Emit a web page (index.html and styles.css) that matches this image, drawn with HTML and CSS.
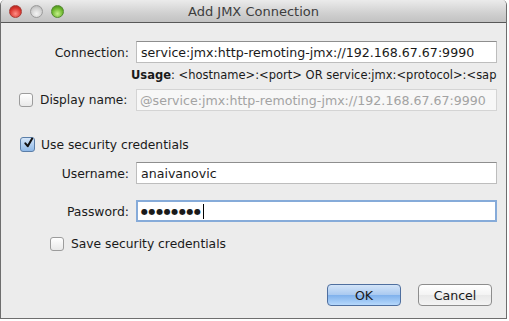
FILE: index.html
```html
<!DOCTYPE html>
<html lang="en">
<head>
    <meta charset="UTF-8">
    <title>Add JMX Connection</title>
    <link rel="stylesheet" href="styles.css">
</head>
<body>

<div class="window">
    <div class="titlebar">
        <div class="lights">
            <span class="light red"></span>
            <span class="light grey"></span>
            <span class="light green"></span>
        </div>
        <div class="title">Add JMX Connection</div>
    </div>

    <div class="content">
        <div class="row row-connection">
            <div class="label">Connection:</div>
            <div class="field">service:jmx:http-remoting-jmx://192.168.67.67:9990</div>
        </div>
        <div class="usage"><b>Usage</b>: &lt;hostname&gt;:&lt;port&gt; OR service:jmx:&lt;protocol&gt;:&lt;sap</div>

        <div class="row row-display">
            <div class="label">
                <span class="check"></span>
                <span class="check-text">Display name:</span>
            </div>
            <div class="field disabled">@service:jmx:http-remoting-jmx://192.168.67.67:9990</div>
        </div>

        <div class="option option-security">
            <span class="check checked">
                <svg width="14" height="14" viewBox="0 0 14 14"><path d="M3 7.5 L6 11 L11.5 1.5" fill="none" stroke="#111" stroke-width="2.6" stroke-linecap="round" stroke-linejoin="round"/></svg>
            </span>
            <span>Use security credentials</span>
        </div>

        <div class="row row-user">
            <div class="label">Username:</div>
            <div class="field">anaivanovic</div>
        </div>

        <div class="row row-pass">
            <div class="label">Password:</div>
            <div class="field focused"><span class="dots">&#9679;&#9679;&#9679;&#9679;&#9679;&#9679;&#9679;&#9679;</span><span class="caret"></span></div>
        </div>

        <div class="option option-save">
            <span class="check"></span>
            <span>Save security credentials</span>
        </div>

        <div class="buttons">
            <button class="btn btn-ok">OK</button>
            <button class="btn">Cancel</button>
        </div>
    </div>
</div>

</body>
</html>
```

FILE: styles.css
```css
body {
    margin: 0;
    background: #ffffff;
    font-family: 'DejaVu Sans', sans-serif;
    font-size: 12px;
    color: #1a1a1a;
}
.window {
    width: 507px;
    height: 319px;
    background: #ececec;
    border: 1px solid #6e6e6e;
    border-top: none;
    border-radius: 5px 5px 0 0;
    box-sizing: border-box;
    overflow: hidden;
}
.titlebar {
    height: 22px;
    background: linear-gradient(#ebebeb, #d0d0d0 60%, #c2c2c2);
    border-bottom: 1px solid #585858;
    display: flex;
    align-items: center;
    position: relative;
}
.lights {
    display: flex;
    gap: 8px;
    padding-left: 8px;
}
.light {
    width: 13px;
    height: 13px;
    border-radius: 50%;
    box-sizing: border-box;
}
.light.red {
    background: radial-gradient(circle at 50% 70%, #ff8f86, #d8332c 60%, #9a1f1a);
    border: 1px solid #a83d37;
}
.light.grey {
    background: radial-gradient(circle at 50% 70%, #f4f4f4, #cfcfcf 60%, #a8a8a8);
    border: 1px solid #9a9a9a;
}
.light.green {
    background: radial-gradient(circle at 50% 70%, #c5f08a, #69b42a 60%, #3f7a18);
    border: 1px solid #538a30;
}
.title {
    position: absolute;
    left: 0;
    right: 0;
    text-align: center;
    font-size: 13px;
    color: #3d3d3d;
}
.content {
    padding: 18px 9px 0 0;
}
.row {
    display: flex;
    align-items: center;
    height: 22px;
}
.label {
    width: 128px;
    display: flex;
    justify-content: flex-end;
    align-items: center;
    margin-right: 7px;
    font-size: 12.4px;
    white-space: nowrap;
}
.field {
    flex: 1;
    height: 22px;
    box-sizing: border-box;
    background: #ffffff;
    border: 1px solid #bdbdbd;
    border-top-color: #8e8e8e;
    padding: 0 4px;
    display: flex;
    align-items: center;
    font-size: 12.6px;
    white-space: nowrap;
    overflow: hidden;
}
.field.disabled {
    color: #a3a3a3;
    background: #f7f7f7;
    border-color: #d4d4d4;
    padding-left: 3px;
}
.field.focused {
    border: 2px solid #86abd9;
    padding-left: 3px;
}
.dots {
    font-size: 8px;
    letter-spacing: 0.6px;
}
.caret {
    width: 1px;
    height: 15px;
    background: #000;
    margin-left: 1px;
}
.usage {
    margin: 5px 0 0 130px;
    font-size: 11.5px;
    white-space: nowrap;
}
.row-display {
    margin-top: 7px;
}
.row-display .label {
    justify-content: flex-start;
    padding-left: 18px;
    box-sizing: border-box;
}
.check-text {
    font-size: 12.2px;
}
.check {
    width: 14px;
    height: 14px;
    box-sizing: border-box;
    border: 1px solid #9c9c9c;
    border-radius: 3px;
    background: linear-gradient(#ffffff, #e9e9e9);
    display: inline-flex;
    align-items: center;
    justify-content: center;
    margin-right: 7px;
    flex: none;
}
.check.checked {
    width: 15px;
    height: 15px;
    border-color: #5b7ea8;
    background: linear-gradient(#d4e5f8, #8fb9e8);
}
.check.checked svg {
    margin-top: -3px;
    margin-left: 2px;
}
.option {
    display: flex;
    align-items: center;
    font-size: 12.3px;
}
.option-security {
    margin: 26px 0 0 19px;
}
.option-security .check {
    margin-right: 6px;
}
.row-user {
    margin-top: 10px;
}
.row-pass {
    margin-top: 16px;
}
.option-save {
    margin: 15px 0 0 49px;
}
.buttons {
    display: flex;
    justify-content: flex-end;
    gap: 17px;
    margin-top: 33px;
    padding-right: 5px;
}
.btn {
    width: 74px;
    height: 22px;
    border: 1px solid #8d8d8d;
    border-radius: 4px;
    background: linear-gradient(#ffffff, #f3f3f3 50%, #e8e8e8 51%, #f4f4f4);
    font-family: 'DejaVu Sans', sans-serif;
    font-size: 12.6px;
    color: #1a1a1a;
    padding: 0;
}
.btn-ok {
    border-color: #4f6f9f;
    background: linear-gradient(#d3e4f8, #a9c9f0 50%, #7fb1ec 51%, #b6d8fb);
}
```
